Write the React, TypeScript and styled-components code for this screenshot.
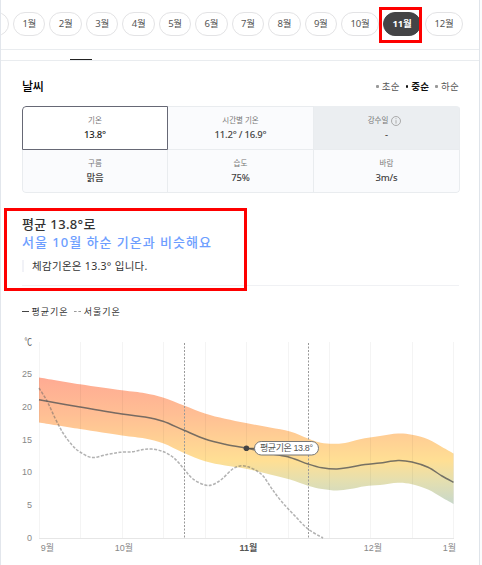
import React from "react";
import styled, { createGlobalStyle } from "styled-components";

const GlobalStyle = createGlobalStyle`
  * { box-sizing: border-box; }
  body {
    margin: 0;
    background: #fbfcfd;
    font-family: "Noto Sans", "Noto Sans CJK KR", sans-serif;
    color: #333;
  }
`;

const Page = styled.main`
  width: 480px;
  height: 565px;
  overflow: hidden;
  background: #fff;
  border-left: 1px solid #e2e6ec;
  border-right: 1px solid #dfe4ea;
`;

const MonthBar = styled.nav`
  position: relative;
  display: flex;
  gap: 4px;
  height: 50px;
  padding-top: 12px;
  border-bottom: 1px solid #e9ecef;
`;

const Month = styled.button<{ $wide?: boolean; $active?: boolean }>`
  flex: none;
  width: ${(p) => (p.$wide ? 38 : 32.45)}px;
  height: 24px;
  padding: 0 0 1px;
  border: 1px solid ${(p) => (p.$active ? "#444446" : "#e3e3e5")};
  border-radius: 12px;
  background: ${(p) => (p.$active ? "#444446" : "#fff")};
  color: ${(p) => (p.$active ? "#fff" : "#555")};
  font: ${(p) => (p.$active ? 700 : 400)} 9.5px/20px "Noto Sans", "Noto Sans CJK KR", sans-serif;
  letter-spacing: -0.2px;
  white-space: nowrap;
  &:first-child { margin-left: -24.4px; }
`;

const Highlight = styled.div<{ $x: number; $y: number; $w: number; $h: number }>`
  position: absolute;
  left: ${(p) => p.$x}px;
  top: ${(p) => p.$y}px;
  width: ${(p) => p.$w}px;
  height: ${(p) => p.$h}px;
  border: 3px solid #fe0000;
  pointer-events: none;
`;

const TabStrip = styled.div`
  height: 11px;
  padding-left: 69px;
  border-bottom: 1px solid #e9ecef;
`;

const TabIndicator = styled.div`
  width: 22px;
  height: 10px;
  border-bottom: 1px solid #222;
`;

const Content = styled.section`
  padding: 0 20px 0 21px;
`;

const Header = styled.header`
  display: flex;
  justify-content: space-between;
  align-items: center;
  height: 45px;
  padding-top: 6px;
`;

const Title = styled.h2`
  margin: 0;
  font-size: 12px;
  line-height: 18px;
  font-weight: 500;
  letter-spacing: -0.2px;
  color: #000;
`;

const Periods = styled.div`
  display: flex;
  gap: 6px;
`;

const Period = styled.span<{ $active?: boolean }>`
  display: flex;
  align-items: center;
  gap: 3px;
  font-size: 9.5px;
  line-height: 16px;
  letter-spacing: 0.3px;
  font-weight: ${(p) => (p.$active ? 700 : 400)};
  color: ${(p) => (p.$active ? "#111" : "#555")};
  &::before {
    content: "";
    width: 2.5px;
    height: 3px;
    border-radius: 1px;
    background: ${(p) => (p.$active ? "#111" : "#999")};
  }
`;

const Grid = styled.div`
  display: grid;
  grid-template-columns: 146px 146px 146px;
  grid-template-rows: 44px 43px;
  width: 438px;
  border-radius: 4px;
  overflow: hidden;
`;

const Cell = styled.div<{ $kind?: "active" | "muted" }>`
  display: flex;
  flex-direction: column;
  align-items: center;
  padding-top: 7px;
  border: 1px solid #e9ecef;
  border-width: 0 1px 1px 0;
  background: ${(p) => (p.$kind === "muted" ? "#ebeef1" : p.$kind === "active" ? "#fff" : "#fafbfd")};
  color: ${(p) => (p.$kind === "active" ? "#222" : "#444")};
  ${(p) => p.$kind === "active" && "border: 1px solid #666875; border-radius: 4px 0 0 0; padding-top: 6px;"}
  &:nth-child(n + 4) { padding-top: 6px; }
  &:nth-child(2) { border-top-width: 1px; padding-top: 6px; }
  &:nth-child(4) { border-left-width: 1px; border-radius: 0 0 0 4px; }
  &:nth-child(6) { border-radius: 0 0 4px 0; }
`;

const CellLabel = styled.span`
  display: flex;
  align-items: center;
  gap: 3px;
  height: 15px;
  font-size: 7.5px;
  line-height: 15px;
  color: #777;
  svg { margin-right: 4px; }
`;

const CellValue = styled.span`
  font-size: 9.5px;
  line-height: 14px;
  font-weight: 500;
  letter-spacing: -0.2px;
`;

const Summary = styled.div`
  height: 93px;
  padding-top: 22px;
  border-bottom: 1px solid #f0f1f4;
`;

const Lead = styled.p<{ $accent?: boolean }>`
  margin: 0;
  font-size: 13px;
  line-height: 18px;
  font-weight: 500;
  letter-spacing: ${(p) => (p.$accent ? 1 : 0.35)}px;
  white-space: nowrap;
  color: ${(p) => (p.$accent ? "#6d9eff" : "#333")};
`;

const Feels = styled.p`
  margin: 9px 0 0;
  padding-left: 8px;
  border-left: 2px solid #f1f2f7;
  font-size: 10.5px;
  line-height: 12px;
  letter-spacing: 0.3px;
  color: #333;
`;

const Legend = styled.div`
  display: flex;
  align-items: center;
  gap: 5px;
  height: 51px;
  font-size: 9px;
  letter-spacing: 1px;
`;

const LegendItem = styled.span<{ $dashed?: boolean }>`
  display: flex;
  align-items: center;
  gap: ${(p) => (p.$dashed ? 3 : 2.5)}px;
  &::before {
    content: "";
    width: 7px;
    border-top: 1px ${(p) => (p.$dashed ? "dashed #999" : "solid #444")};
  }
`;

const ChartFrame = styled.figure`
  margin: -1px 0 0 -21px;
  svg { display: block; }
`;

type Point = [number, number];

const upper: Point[] = [[39, 377.5], [80, 384.3], [122, 390.3], [145, 393.2], [163, 397.5], [184, 405.5], [205, 413.5], [225, 418.8], [246, 423], [270, 427.5], [290, 431.5], [308, 438.5], [318, 442], [330, 443.8], [345, 443], [360, 439.2], [380, 436], [398, 433.5], [412, 434.8], [428, 439.2], [442, 447], [453.5, 453.5]];
const mean: Point[] = [[39, 399.8], [80, 407], [122, 414], [145, 417], [163, 421.3], [184, 430.3], [205, 439], [225, 444.2], [246, 448], [270, 453.5], [290, 457.5], [308, 464], [322, 467.8], [337, 469], [350, 467.3], [365, 464.5], [380, 463], [398, 460.5], [412, 462], [428, 467.3], [442, 476], [453.5, 482.3]];
const lower: Point[] = [[39, 422.5], [80, 429], [122, 435.5], [145, 438.5], [163, 443.3], [184, 453], [205, 461.3], [225, 465.5], [246, 468.7], [270, 474.5], [290, 479.5], [308, 485.7], [322, 489], [337, 490.5], [350, 489], [365, 486.2], [380, 485], [398, 482.7], [412, 484.2], [428, 489.5], [442, 497.5], [453.5, 504]];
const seoul: Point[] = [[39, 388], [47, 401], [55, 418], [63, 433], [72, 445], [80, 452], [92, 457.5], [107, 454.5], [120, 452.3], [133, 451.7], [143, 449.6], [152, 449.1], [163, 451.5], [174, 458], [184, 469], [193, 479], [205, 485], [213, 484.5], [222, 479], [232, 469.5], [240, 466], [248, 466.8], [257, 471], [264, 477], [272, 489], [282, 502], [295, 516], [308, 529], [323, 538]];

// Catmull-Rom spline expressed as cubic Bezier segments.
const curve = (pts: Point[]) =>
  pts
    .slice(0, -1)
    .map((p, i) => {
      const a = pts[Math.max(i - 1, 0)];
      const q = pts[i + 1];
      const b = pts[Math.min(i + 2, pts.length - 1)];
      return `C${p[0] + (q[0] - a[0]) / 6},${p[1] + (q[1] - a[1]) / 6} ${q[0] - (b[0] - p[0]) / 6},${q[1] - (b[1] - p[1]) / 6} ${q[0]},${q[1]}`;
    })
    .join("");

const line = (pts: Point[]) => `M${pts[0].join(",")}${curve(pts)}`;
const reversed = [...lower].reverse();
const band = `${line(upper)}L${reversed[0].join(",")}${curve(reversed)}Z`;

const gridX = [39.5, 80.5, 122.5, 163.5, 205.5, 246.5, 288.5, 329.5, 370.5, 412.5, 453.5];
const yTicks: [string, number][] = [["25", 377], ["20", 409.5], ["15", 442.5], ["10", 475], ["5", 508.3], ["0", 541]];
const xTicks: [string, number, boolean?][] = [["9월", 47.5], ["10월", 124], ["11월", 248.5, true], ["12월", 373], ["1월", 449.5]];

const AxisText = styled.text<{ $bold?: boolean; $dark?: boolean }>`
  font-family: "Liberation Sans", "Noto Sans CJK KR", sans-serif;
  font-size: 9px;
  font-weight: ${(p) => (p.$bold ? 700 : 400)};
  fill: ${(p) => (p.$bold || p.$dark ? "#555" : "#888")};
`;

const InfoIcon = () => (
  <svg width="10" height="10" viewBox="0 0 10 10" fill="none" stroke="#999" strokeWidth="0.8">
    <circle cx="5" cy="5" r="4.5" />
    <path d="M5 4.2V7.6M5 2.3V3.2" />
  </svg>
);

const Chart = () => (
  <ChartFrame>
    <svg width="479" height="229" viewBox="1 336 479 229">
      <defs>
        <linearGradient id="heat" gradientUnits="userSpaceOnUse" x1="0" y1="377" x2="0" y2="504">
          <stop offset="0" stopColor="#ffaa93" />
          <stop offset="0.3" stopColor="#ffbf94" />
          <stop offset="0.66" stopColor="#ffdf94" />
          <stop offset="0.82" stopColor="#e4dfb0" />
          <stop offset="1" stopColor="#c8d8ca" />
        </linearGradient>
      </defs>
      <path d={band} fill="url(#heat)" />
      {gridX.map((x) => (
        <path key={x} d={`M${x} 342V538`} stroke="#000" strokeOpacity="0.045" />
      ))}
      <path d="M39 538.5H454" stroke="#e6e6e6" />
      <path d={line(seoul)} fill="none" stroke="#666" strokeOpacity="0.5" strokeWidth="1.5" strokeDasharray="3 1.5" />
      <path d="M184.5 343V539M308.5 343V539" stroke="#999" strokeDasharray="2 1.5" />
      <path d={line(mean)} fill="none" stroke="#555" strokeOpacity="0.8" strokeWidth="1.5" />
      <path d="M246 448.3H256" stroke="#444" />
      <circle cx="246.4" cy="448.3" r="2.8" fill="#444" />
      <rect x="254.5" y="441.5" width="64" height="13.5" rx="6.7" fill="#fff" stroke="#777" />
      <AxisText x="286.5" y="451.3" textAnchor="middle" textLength="53" $dark>평균기온 13.8°</AxisText>
      <AxisText x="24.5" y="344.5" textLength="7.5" lengthAdjust="spacingAndGlyphs" $dark>℃</AxisText>
      {yTicks.map(([label, y]) => (
        <AxisText key={label} x="32" y={y} textAnchor="end">{label}</AxisText>
      ))}
      {xTicks.map(([label, x, bold]) => (
        <AxisText key={label} x={x} y="551.3" textAnchor="middle" $bold={bold}>{label}</AxisText>
      ))}
    </svg>
  </ChartFrame>
);

const months = Array.from({ length: 12 }, (_, i) => i + 1);

export default function App() {
  return (
    <>
      <GlobalStyle />
      <Page>
        <MonthBar>
          <Month />
          {months.map((m) => (
            <Month key={m} $wide={m > 9} $active={m === 11}>{m}월</Month>
          ))}
          <Highlight $x={378} $y={7} $w={43} $h={36} />
        </MonthBar>
        <TabStrip><TabIndicator /></TabStrip>
        <Content>
          <Header>
            <Title>날씨</Title>
            <Periods>
              <Period>초순</Period>
              <Period $active>중순</Period>
              <Period>하순</Period>
            </Periods>
          </Header>
          <Grid>
            <Cell $kind="active"><CellLabel>기온</CellLabel><CellValue>13.8°</CellValue></Cell>
            <Cell><CellLabel>시간별 기온</CellLabel><CellValue>11.2° / 16.9°</CellValue></Cell>
            <Cell $kind="muted"><CellLabel>강수일 <InfoIcon /></CellLabel><CellValue>-</CellValue></Cell>
            <Cell><CellLabel>구름</CellLabel><CellValue>맑음</CellValue></Cell>
            <Cell><CellLabel>습도</CellLabel><CellValue>75%</CellValue></Cell>
            <Cell><CellLabel>바람</CellLabel><CellValue>3m/s</CellValue></Cell>
          </Grid>
          <Summary>
            <Lead>평균 13.8°로</Lead>
            <Lead $accent>서울 10월 하순 기온과 비슷해요</Lead>
            <Feels>체감기온은 13.3° 입니다.</Feels>
          </Summary>
          <Legend>
            <LegendItem>평균기온</LegendItem>
            <LegendItem $dashed>서울기온</LegendItem>
          </Legend>
          <Chart />
        </Content>
        <Highlight $x={4} $y={208} $w={243} $h={83} />
      </Page>
    </>
  );
}
